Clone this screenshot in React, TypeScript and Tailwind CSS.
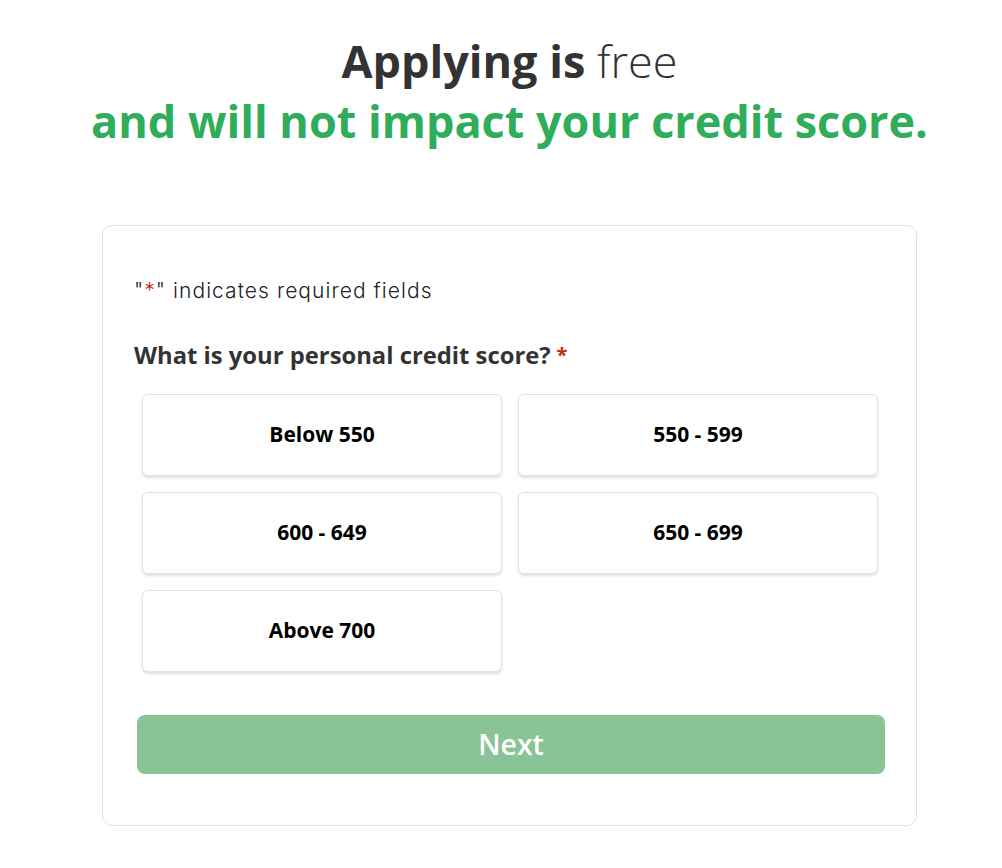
const options = ['Below 550', '550 - 599', '600 - 649', '650 - 699', 'Above 700'];

export default function App() {
    return (
        <div className="min-h-[868px] bg-white pl-[17px]" style={{ fontFamily: '"Open Sans", sans-serif' }}>
            <div className="pt-[31px] text-center">
                <h1 className="text-[45px] leading-[60px] text-[#333333]">
                    <span className="font-bold">Applying is</span> <span className="font-light">free</span>
                </h1>
                <h2 className="text-[45px] leading-[60px] font-bold text-[#2fad5a]">
                    and will not impact your credit score.
                </h2>
            </div>

            <div className="mx-auto mt-[74px] w-[815px] rounded-[10px] border border-[#e2e2e2] px-[31px] pt-[50px] pb-[51px]">
                <p
                    className="text-[21px] leading-[30px] font-light tracking-[0.05em] text-[#222]"
                    style={{ fontFamily: 'Inter, sans-serif' }}
                >
                    "<span className="text-[#c02b0a]">*</span>" indicates required fields
                </p>

                <div className="mt-[32px] flex items-center gap-[6px] text-[23.8px] leading-[34px] font-bold text-[#333]">
                    What is your personal credit score?
                    <span className="text-[20px] text-[#c02b0a]">*</span>
                </div>

                <div className="mt-[22px] grid grid-cols-2 gap-x-[16px] gap-y-[16px] pl-[8px] pr-[7px]">
                    {options.map((opt) => (
                        <button
                            key={opt}
                            className="flex h-[82px] items-center justify-center rounded-[6px] border border-[#dfe3e8] bg-white text-[21px] font-bold text-black shadow-[0_2px_3px_rgba(150,170,190,0.35)]"
                        >
                            {opt}
                        </button>
                    ))}
                </div>

                <button className="mt-[43px] ml-[3px] flex h-[59px] w-[748px] items-center justify-center rounded-[8px] bg-[#89c497] text-[28.5px] font-semibold text-white">
                    Next
                </button>
            </div>
        </div>
    );
}
